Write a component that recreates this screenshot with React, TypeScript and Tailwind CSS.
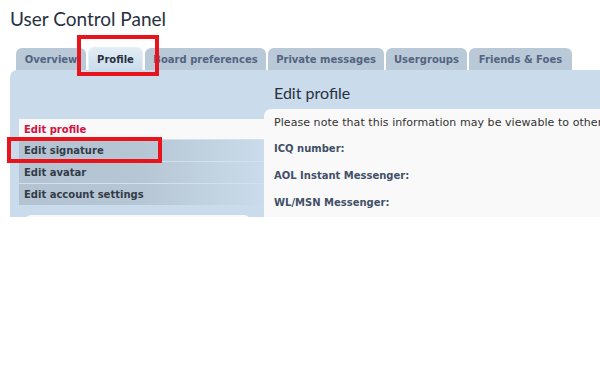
import React from "react";

const TABS = [
  { label: "Overview", w: "w-[70px]" },
  { label: "Profile", w: "w-[55px]", active: true },
  { label: "Board preferences", w: "w-[121px]" },
  { label: "Private messages", w: "w-[116px]" },
  { label: "Usergroups", w: "w-[81px]" },
  { label: "Friends & Foes", w: "w-[103px]" },
];

const MENU = ["Edit signature", "Edit avatar", "Edit account settings"];

const FIELDS = ["ICQ number:", "AOL Instant Messenger:", "WL/MSN Messenger:"];

export default function App() {
  return (
    <div className="relative h-[370px] w-[600px] overflow-hidden bg-white font-['DejaVu_Sans',Verdana,sans-serif] text-[#333]">
      <h1 className="pl-[10px] pt-[6px] font-['Lato',sans-serif] text-[19px] leading-[25px] text-[#28313f]">
        User Control Panel
      </h1>

      {/* tabs */}
      <div className="mt-[16px] flex gap-[2px] pl-[16px]">
        {TABS.map((t) =>
          t.active ? (
            <div
              key={t.label}
              className={`${t.w} flex h-[23px] items-center justify-center rounded-t-[6px] border border-b-0 border-[#e6eef6] bg-gradient-to-b from-[#e3ecf4] to-[#cadceb] text-[10px] font-bold text-[#28313f]`}
            >
              {t.label}
            </div>
          ) : (
            <div
              key={t.label}
              className={`${t.w} mt-[1px] flex h-[22px] items-center justify-center rounded-t-[6px] bg-[#b9c9d7] text-[10px] font-bold text-[#536482]`}
            >
              {t.label}
            </div>
          )
        )}
      </div>

      {/* panel */}
      <div className="ml-[10px] flex h-[147px] overflow-hidden rounded-tl-[7px] bg-[#cadceb]">
        <div className="flex w-[254px] shrink-0 flex-col pl-[9px] pt-[49px]">
          <div className="flex h-[20px] shrink-0 items-center bg-[#f9f9f9] pl-[5px] text-[10px] font-bold text-[#d31141]">
            Edit profile
          </div>
          {MENU.map((m) => (
            <div
              key={m}
              className="flex h-[22px] shrink-0 items-center border-t border-[#d4e1ec] bg-gradient-to-r from-[#b3c3d1] via-[#b6c6d4] to-[#cadceb] pl-[5px] text-[10px] font-bold text-[#333c48]"
            >
              {m}
            </div>
          ))}
          <div className="ml-[6px] mr-[14px] mt-[10px] h-[10px] shrink-0 rounded-t-[6px] bg-[#f9f9f9]" />
        </div>

        <div className="flex min-w-0 flex-1 flex-col">
          <h2 className="whitespace-nowrap pl-[10px] pt-[13px] font-['Lato',sans-serif] text-[16px] leading-[20px] text-[#28313f]">
            Edit profile
          </h2>
          <div className="mt-[6px] flex-1 rounded-tl-[7px] bg-[#f9f9f9] pl-[10px] pt-[5px]">
            <p className="whitespace-nowrap text-[11px] leading-[18px] tracking-[0.06px] text-[#333]">
              Please note that this information may be viewable to other members.
            </p>
            {FIELDS.map((f, i) => (
              <p
                key={f}
                className={`${i === 0 ? "mt-[8px]" : "mt-[9px]"} whitespace-nowrap text-[10px] font-bold leading-[18px] text-[#425067]`}
              >
                {f}
              </p>
            ))}
          </div>
        </div>
      </div>

      {/* red annotation boxes */}
      <div className="absolute left-[77px] top-[35px] h-[41px] w-[82px] border-[4px] border-[#e8141c]" />
      <div className="absolute left-[7px] top-[137px] h-[26px] w-[155px] border-[4px] border-[#e8141c]" />
    </div>
  );
}
